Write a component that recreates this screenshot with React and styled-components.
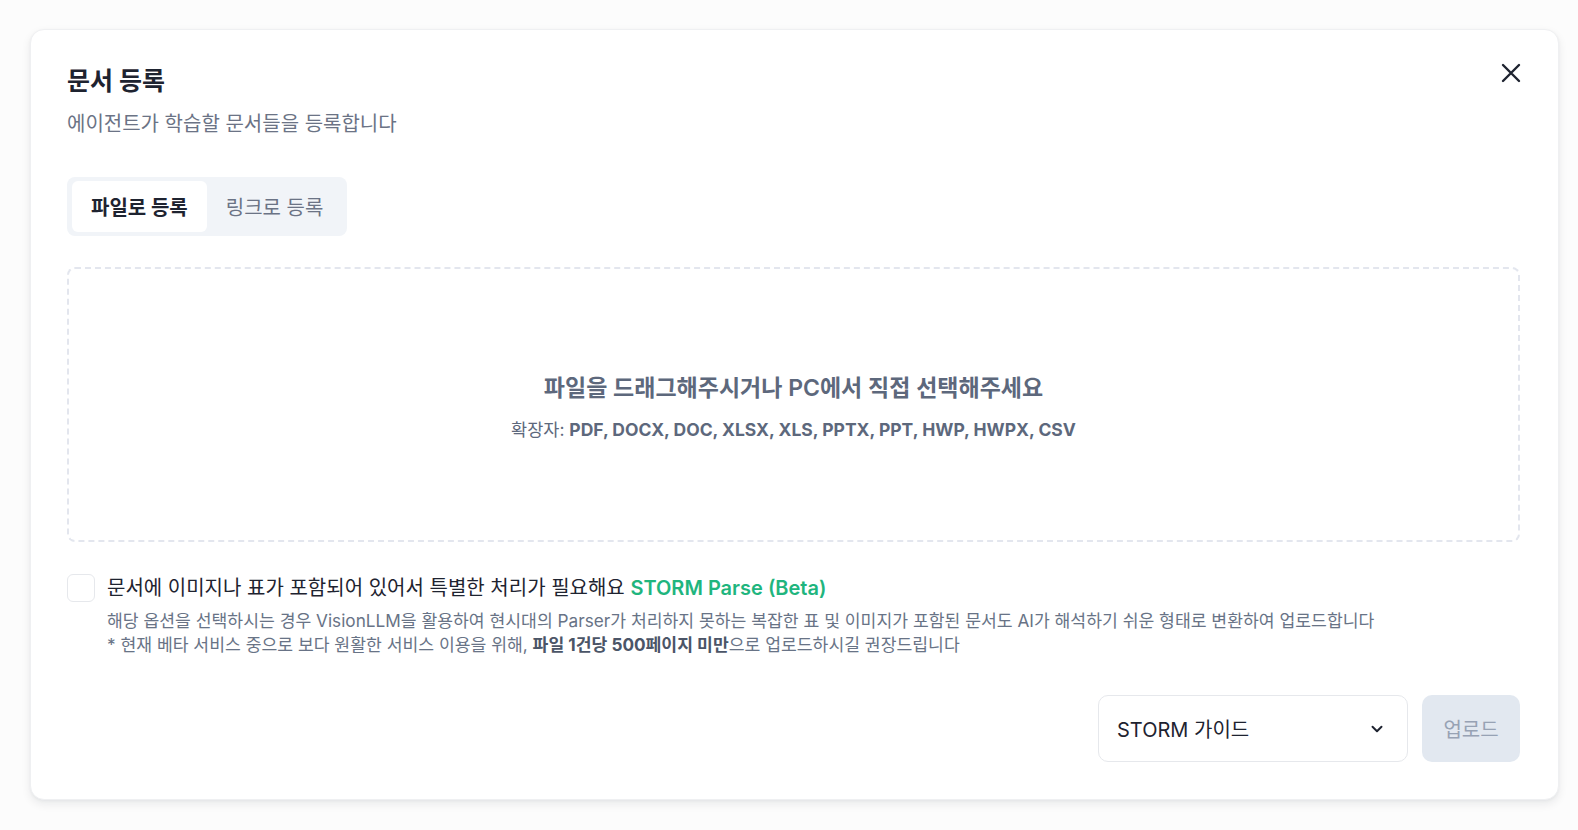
import React from "react";
import styled, { createGlobalStyle } from "styled-components";

const Global = createGlobalStyle`
  html, body { margin: 0; padding: 0; background: #fcfcfc; overflow: hidden; }
  body { font-family: Inter, "Noto Sans CJK KR", sans-serif; -webkit-font-smoothing: antialiased; }
  * { box-sizing: border-box; }
`;

const Page = styled.div`
  height: 830px;
  padding: 29px 0 0 30px;
  background: #fcfcfc;
`;

const Card = styled.div`
  position: relative;
  width: 1529px;
  height: 771px;
  background: #fff;
  border: 1px solid #eff0f2;
  border-radius: 14px;
  box-shadow: 0 4px 10px rgba(15, 23, 42, 0.08), 0 1px 3px rgba(15, 23, 42, 0.04);
  padding: 35px 38px 37px 36px;
  display: flex;
  flex-direction: column;
`;

const Title = styled.h2`
  margin: 0;
  font-size: 25px;
  font-weight: 700;
  color: #1e2330;
  line-height: 32px;
`;

const Subtitle = styled.p`
  margin: 13px 0 0;
  font-size: 20px;
  color: #6b7385;
  line-height: 28px;
`;

const CloseBtn = styled.button`
  position: absolute;
  top: 32px;
  right: 36px;
  width: 22px;
  height: 22px;
  padding: 0;
  border: 0;
  background: transparent;
  color: #1e2330;
  cursor: pointer;
  display: flex;
  align-items: center;
  justify-content: center;
`;

const Tabs = styled.div`
  margin-top: 39px;
  align-self: flex-start;
  display: flex;
  padding: 4px 5px;
  background: #f1f4f8;
  border-radius: 8px;
`;

const Tab = styled.button`
  border: 0;
  border-radius: 6px;
  height: 51px;
  padding: 0 19px;
  font-family: inherit;
  font-size: 20px;
  font-weight: ${(p) => (p.$active ? 700 : 400)};
  color: ${(p) => (p.$active ? "#1e2330" : "#6b7385")};
  background: ${(p) => (p.$active ? "#ffffff" : "transparent")};
  cursor: pointer;
`;

const DropZone = styled.div`
  margin-top: 31px;
  height: 275px;
  padding-top: 4px;
  border: 2px dashed #e3e6ee;
  border-radius: 8px;
  display: flex;
  flex-direction: column;
  align-items: center;
  justify-content: center;
  gap: 14px;
`;

const DropTitle = styled.div`
  font-size: 23px;
  font-weight: 600;
  color: #5d687c;
  line-height: 32px;
`;

const DropExt = styled.div`
  font-size: 17.5px;
  color: #5d687c;
  line-height: 24px;
  b { font-weight: 700; }
`;

const OptionRow = styled.div`
  margin-top: 32px;
  display: flex;
  gap: 12px;
  align-items: flex-start;
`;

const Check = styled.span`
  width: 28px;
  height: 28px;
  flex: none;
  border: 1px solid #e6e8ec;
  border-radius: 6px;
  background: #fff;
`;

const OptionBody = styled.div`
  display: flex;
  flex-direction: column;
`;

const OptionLabel = styled.div`
  font-size: 20px;
  color: #1e2330;
  line-height: 28px;
`;

const Green = styled.span`
  color: #1fb57e;
  font-weight: 600;
`;

const Desc = styled.div`
  margin-top: ${(p) => p.$mt || 0}px;
  font-size: 17.2px;
  color: #687386;
  line-height: 24px;
  b { font-weight: 700; color: #4b5567; }
`;

const Footer = styled.div`
  margin-top: auto;
  display: flex;
  justify-content: flex-end;
  gap: 14px;
`;

const Select = styled.div`
  width: 310px;
  height: 67px;
  border: 1px solid #e6e8ec;
  border-radius: 10px;
  padding: 0 21px 0 18px;
  display: flex;
  align-items: center;
  justify-content: space-between;
  font-size: 20px;
  color: #1e2330;
`;

const Upload = styled.button`
  width: 98px;
  height: 67px;
  border: 0;
  border-radius: 10px;
  background: #e2e8f0;
  color: #97a2b4;
  font-family: inherit;
  font-size: 20px;
`;

export default function App() {
  return (
    <>
      <Global />
      <Page>
        <Card>
          <CloseBtn aria-label="닫기">
            <svg width="20" height="20" viewBox="0 0 20 20" fill="none" stroke="currentColor" strokeWidth="2.4" strokeLinecap="round">
              <path d="M2 2L18 18M18 2L2 18" />
            </svg>
          </CloseBtn>
          <Title>문서 등록</Title>
          <Subtitle>에이전트가 학습할 문서들을 등록합니다</Subtitle>
          <Tabs>
            <Tab $active>파일로 등록</Tab>
            <Tab>링크로 등록</Tab>
          </Tabs>
          <DropZone>
            <DropTitle>파일을 드래그해주시거나 PC에서 직접 선택해주세요</DropTitle>
            <DropExt>
              확장자: <b>PDF, DOCX, DOC, XLSX, XLS, PPTX, PPT, HWP, HWPX, CSV</b>
            </DropExt>
          </DropZone>
          <OptionRow>
            <Check />
            <OptionBody>
              <OptionLabel>
                문서에 이미지나 표가 포함되어 있어서 특별한 처리가 필요해요 <Green>STORM Parse (Beta)</Green>
              </OptionLabel>
              <Desc $mt={7}>
                해당 옵션을 선택하시는 경우 VisionLLM을 활용하여 현시대의 Parser가 처리하지 못하는 복잡한 표 및 이미지가 포함된 문서도 AI가 해석하기 쉬운 형태로 변환하여 업로드합니다
              </Desc>
              <Desc>
                * 현재 베타 서비스 중으로 보다 원활한 서비스 이용을 위해, <b>파일 1건당 500페이지 미만</b>으로 업로드하시길 권장드립니다
              </Desc>
            </OptionBody>
          </OptionRow>
          <Footer>
            <Select>
              <span>STORM 가이드</span>
              <svg width="18" height="18" viewBox="0 0 24 24" fill="none" stroke="#1e2330" strokeWidth="2.6" strokeLinecap="round" strokeLinejoin="round">
                <path d="M6 9l6 6 6-6" />
              </svg>
            </Select>
            <Upload>업로드</Upload>
          </Footer>
        </Card>
      </Page>
    </>
  );
}
